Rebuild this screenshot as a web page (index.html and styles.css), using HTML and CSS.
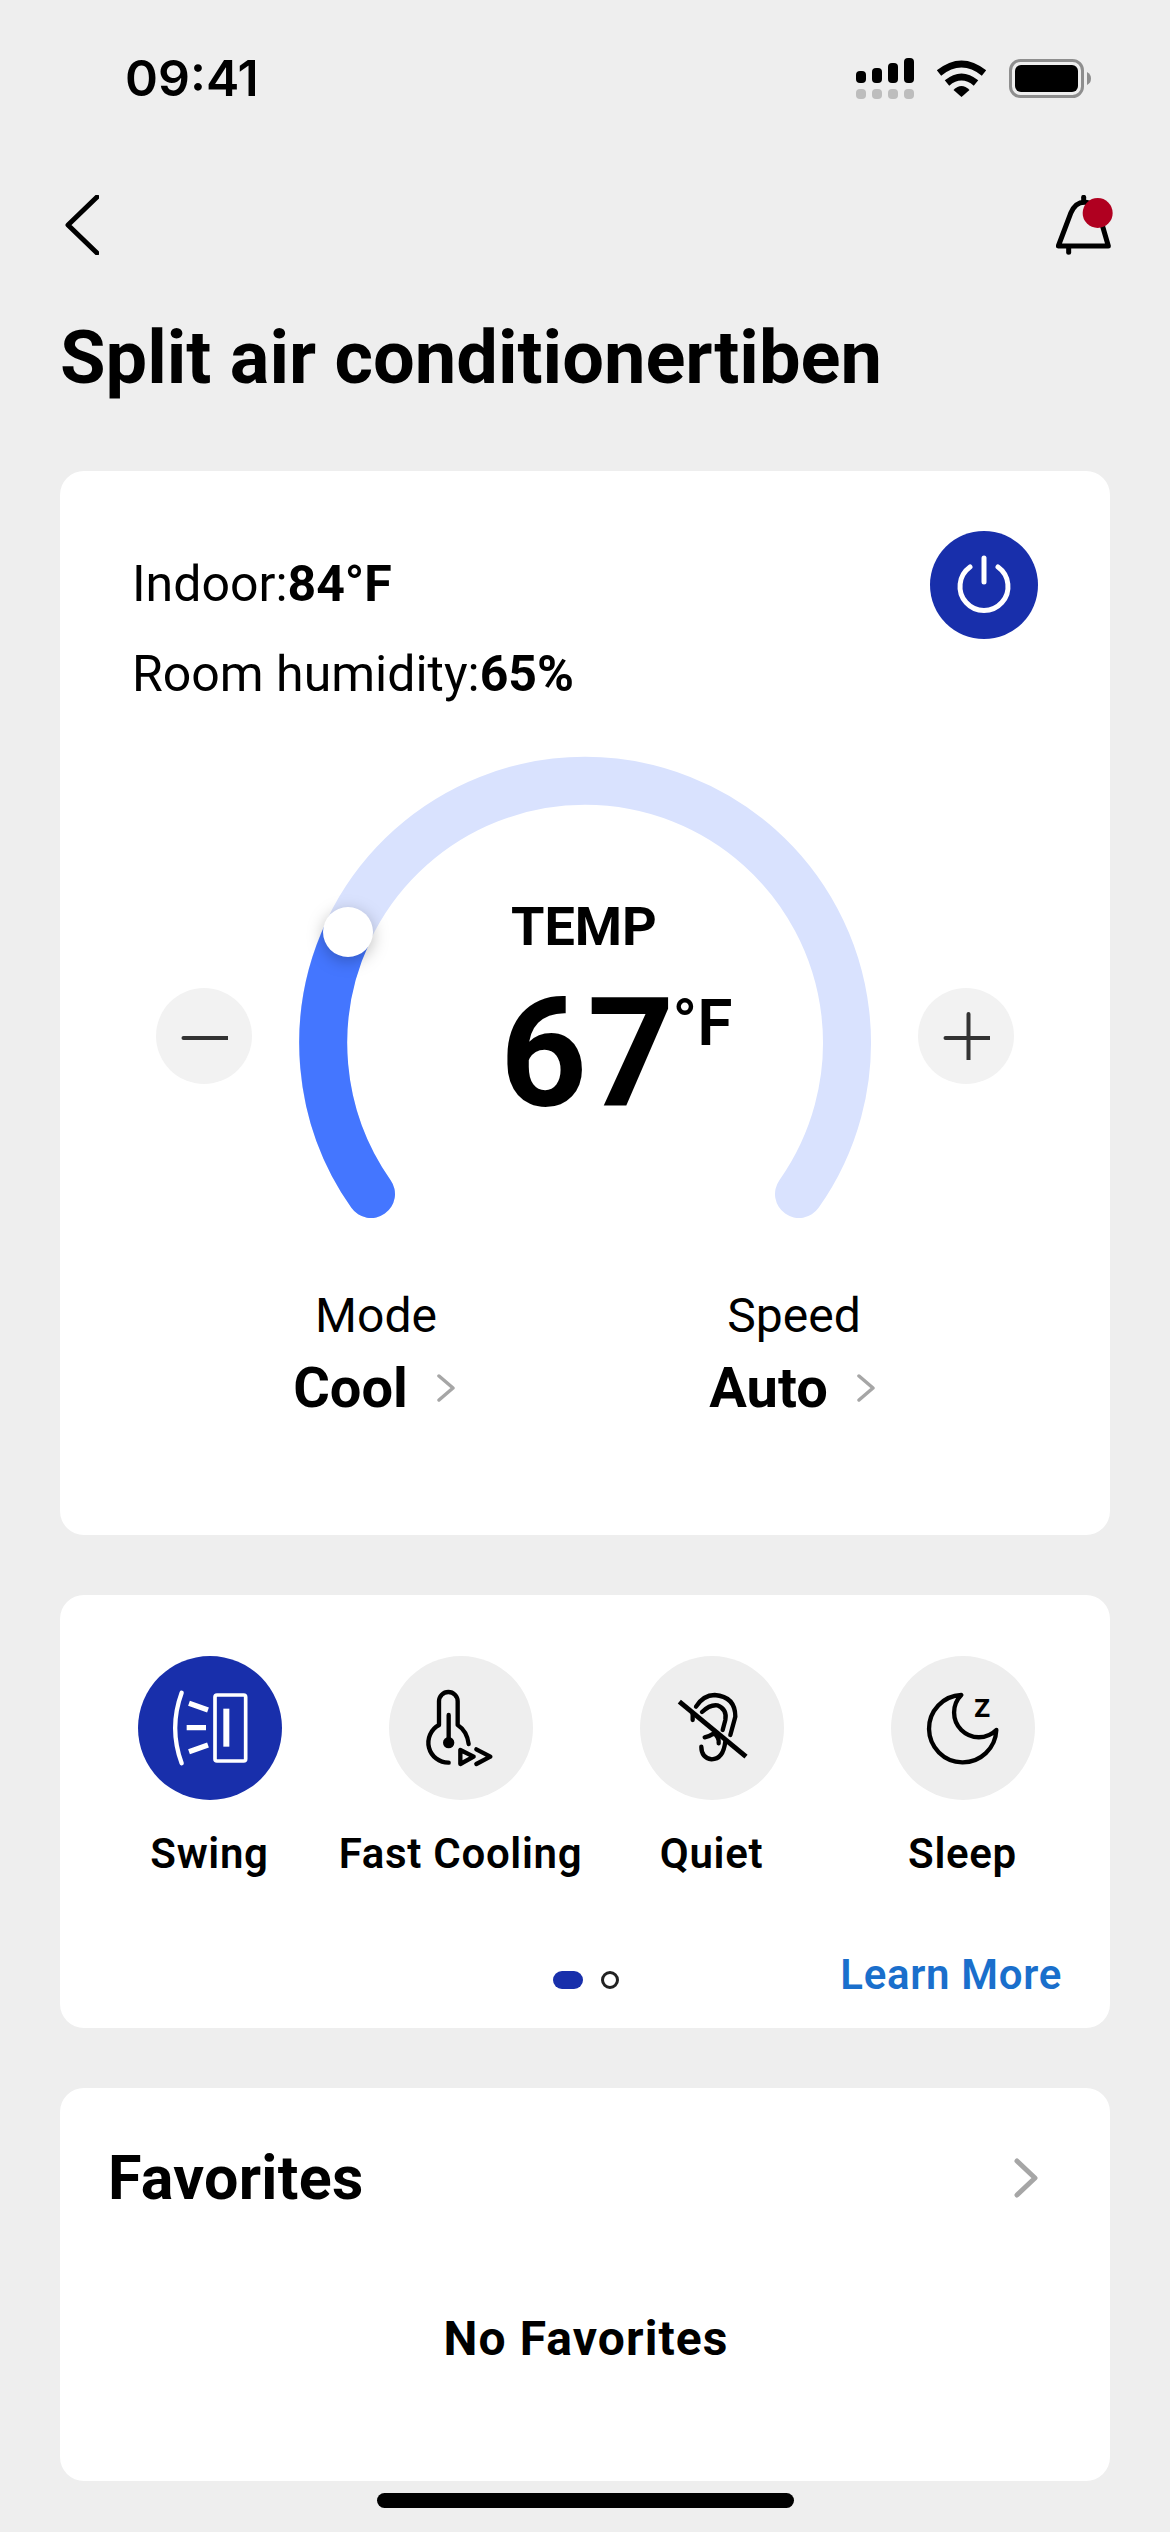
FILE: index.html
```html
<!DOCTYPE html>
<html lang="en">
<head>
    <meta charset="UTF-8">
    <meta name="viewport" content="width=device-width, initial-scale=1.0">
    <title>Split air conditionertiben</title>
    <link rel="stylesheet" href="styles.css">
</head>
<body>
    <div class="status-bar">
        <span class="time">09:41</span>
        <div class="status-icons">
            <svg width="58" height="41" viewBox="0 0 58 41">
                <rect x="0" y="13" width="10" height="12" rx="4"/>
                <rect x="16" y="10" width="10" height="15" rx="4"/>
                <rect x="32" y="5" width="10" height="20" rx="4"/>
                <rect x="48" y="0" width="10" height="25" rx="4"/>
                <g fill="#bdbdbd">
                    <rect x="0" y="31" width="10" height="10" rx="4"/>
                    <rect x="16" y="31" width="10" height="10" rx="4"/>
                    <rect x="32" y="31" width="10" height="10" rx="4"/>
                    <rect x="48" y="31" width="10" height="10" rx="4"/>
                </g>
            </svg>
            <svg width="51" height="37" viewBox="0 0 51 37">
                <path d="M3 13 Q25.5 -5 48 13" fill="none" stroke="#000" stroke-width="7"/>
                <path d="M11 23 Q25.5 11 40 23" fill="none" stroke="#000" stroke-width="7"/>
                <path d="M17.5 30 Q25.5 22 33.5 30 L25.5 37 Z"/>
            </svg>
            <svg width="82" height="39" viewBox="0 0 82 39">
                <rect x="1.5" y="1.5" width="72" height="36" rx="10" fill="none" stroke="#8e8e8e" stroke-width="3"/>
                <rect x="6" y="6" width="63" height="27" rx="6"/>
                <path d="M78 13 Q82 15 82 19.5 Q82 24 78 26 Z" fill="#8e8e8e"/>
            </svg>
        </div>
    </div>

    <div class="page">
        <div class="nav">
            <svg width="34" height="60" viewBox="0 0 34 60">
                <path d="M32 2 L3 30 L32 58" fill="none" stroke="#000" stroke-width="5" stroke-linecap="round" stroke-linejoin="round"/>
            </svg>
            <svg width="57" height="60" viewBox="0 0 171 180">
                <g fill="none" stroke="#000" stroke-width="15" stroke-linecap="round" stroke-linejoin="round">
                    <path d="M7 153 H157 L130 60 Q118 22 85 22 Q58 22 44 55 Z"/>
                    <path d="M83 7 V20"/>
                    <path d="M38 155 V172"/>
                </g>
                <circle cx="125" cy="54" r="45" fill="#b00020"/>
            </svg>
        </div>

        <h1 class="title">Split air conditionertiben</h1>

        <section class="card climate">
            <div class="readings">
                <div class="reading-list">
                    <div class="reading">Indoor:<b>84°F</b></div>
                    <div class="reading">Room humidity:<b>65%</b></div>
                </div>
                <div class="power">
                    <svg width="60" height="60" viewBox="0 0 60 60">
                        <path d="M16 12 A24 24 0 1 0 44 12" fill="none" stroke="#fff" stroke-width="5" stroke-linecap="round"/>
                        <path d="M30 3 V27" fill="none" stroke="#fff" stroke-width="5" stroke-linecap="round"/>
                    </svg>
                </div>
            </div>

            <div class="gauge-row">
                <div class="round-btn">
                    <svg width="48" height="48" viewBox="-2.5 0 48 48"><path d="M1 26 H47" stroke="#333" stroke-width="4" stroke-linecap="round"/></svg>
                </div>
                <div class="gauge">
                    <svg class="gauge-arc" width="572" height="460" viewBox="0 0 572 460">
                        <path class="arc-track" d="M72 438 A262 262 0 1 1 500 438"/>
                        <path class="arc-value" d="M72 438 A262 262 0 0 1 49 176"/>
                        <circle class="arc-handle" cx="49" cy="176" r="25"/>
                    </svg>
                    <div class="gauge-text">
                        <div class="temp-label">TEMP</div>
                        <div class="temp-value">67<span class="temp-unit">°F</span></div>
                    </div>
                </div>
                <div class="round-btn">
                    <svg width="48" height="48" viewBox="-2.5 0 48 48"><path d="M1 26 H47 M24 2 V48" stroke="#333" stroke-width="4" stroke-linecap="round" fill="none"/></svg>
                </div>
            </div>

            <div class="settings">
                <div class="setting">
                    <div class="setting-name">Mode</div>
                    <div class="setting-value">Cool
                        <svg width="20" height="28" viewBox="0 0 20 28"><path d="M3 2 L17 14 L3 26" fill="none" stroke="#a6a6a6" stroke-width="3.5" stroke-linecap="round" stroke-linejoin="round"/></svg>
                    </div>
                </div>
                <div class="setting">
                    <div class="setting-name">Speed</div>
                    <div class="setting-value">Auto
                        <svg width="20" height="28" viewBox="0 0 20 28"><path d="M3 2 L17 14 L3 26" fill="none" stroke="#a6a6a6" stroke-width="3.5" stroke-linecap="round" stroke-linejoin="round"/></svg>
                    </div>
                </div>
            </div>
        </section>

        <section class="card functions">
            <div class="function-grid">
                <div class="function">
                    <div class="function-icon active">
                        <svg width="144" height="144" viewBox="0 0 432 432">
                            <g fill="none" stroke="#fff" stroke-linejoin="round">
                                <rect x="231" y="117" width="92" height="198" rx="6" stroke-width="11"/>
                                <path d="M153 142 L210 162 M146 215 H204 M153 287 L210 267" stroke-width="16"/>
                                <path d="M131 110 Q92 216 131 322" stroke-width="13" stroke-linecap="round"/>
                            </g>
                            <rect x="256" y="158" width="18" height="114" fill="#fff"/>
                        </svg>
                    </div>
                    <div class="function-name">Swing</div>
                </div>
                <div class="function">
                    <div class="function-icon">
                        <svg width="144" height="144" viewBox="0 0 432 432">
                            <g fill="none" stroke="#000" stroke-width="13" stroke-linecap="round" stroke-linejoin="round">
                                <path d="M179 320 A60 60 0 0 1 150 207 V136 A28 28 0 0 1 206 136 V207 Q234 225 239 264"/>
                                <path d="M179 177 V260"/>
                                <path d="M214 282 V324 L254 302 Z"/>
                                <path d="M262 280 L304 302 L262 324"/>
                            </g>
                            <circle cx="179" cy="260" r="17"/>
                        </svg>
                    </div>
                    <div class="function-name">Fast Cooling</div>
                </div>
                <div class="function">
                    <div class="function-icon">
                        <svg width="144" height="144" viewBox="0 0 432 432">
                            <g fill="none" stroke="#000" stroke-width="13" stroke-linecap="round" stroke-linejoin="round">
                                <path d="M168 152 Q190 117 224 117 Q286 122 286 182 L271 237"/>
                                <path d="M186 168 Q210 145 232 148 Q262 160 256 192 L248 222"/>
                                <path d="M158 175 V192"/>
                                <path d="M194 244 Q210 240 222 232 Q238 244 236 262"/>
                                <path d="M256 256 Q250 310 215 310 Q184 305 184 272"/>
                            </g>
                            <path d="M118 137 L318 302" stroke="#000" stroke-width="15"/>
                        </svg>
                    </div>
                    <div class="function-name">Quiet</div>
                </div>
                <div class="function">
                    <div class="function-icon">
                        <svg width="144" height="144" viewBox="0 0 432 432">
                            <path d="M211 117 A101 101 0 1 0 316 222 A70 70 0 0 1 211 117 Z" fill="none" stroke="#000" stroke-width="13" stroke-linejoin="round"/>
                            <text class="moon-z" x="248" y="182">z</text>
                        </svg>
                    </div>
                    <div class="function-name">Sleep</div>
                </div>
            </div>
            <div class="functions-foot">
                <div></div>
                <div class="dots"><span class="dot-current"></span><span class="dot"></span></div>
                <a class="learn-more">Learn More</a>
            </div>
        </section>

        <section class="card favorites">
            <div class="favorites-head">
                <h2 class="favorites-title">Favorites</h2>
                <svg width="24" height="40" viewBox="0 0 24 40"><path d="M3 3 L21 20 L3 37" fill="none" stroke="#a6a6a6" stroke-width="5" stroke-linecap="round" stroke-linejoin="round"/></svg>
            </div>
            <div class="favorites-empty">No Favorites</div>
        </section>

        <div class="home-bar"></div>
    </div>
</body>
</html>
```

FILE: styles.css
```css
* {
    box-sizing: border-box;
}
body {
    margin: 0;
    width: 1170px;
    height: 2532px;
    overflow: hidden;
    background-color: #eeeeee;
    font-family: Roboto, sans-serif;
    color: #000;
}
svg {
    display: block;
}
.status-bar {
    display: flex;
    justify-content: space-between;
    align-items: center;
    height: 60px;
    margin-top: 48px;
    padding: 0 79px 0 125px;
}
.time {
    font-family: Inter, sans-serif;
    font-size: 50px;
    font-weight: 600;
    line-height: 60px;
}
.status-icons {
    display: flex;
    align-items: center;
    gap: 22px;
}
.page {
    padding: 0 60px;
}
.nav {
    display: flex;
    justify-content: space-between;
    align-items: center;
    height: 60px;
    margin: 87px -3px 0 0;
    padding-left: 5px;
}
.title {
    margin: 63px 0 73px;
    font-size: 74px;
    font-weight: 700;
    line-height: 80px;
}
.card {
    background-color: #fff;
    border-radius: 24px;
}
.climate {
    padding: 60px 72px 117px 72px;
    margin-bottom: 60px;
}
.readings {
    display: flex;
    justify-content: space-between;
    height: 172px;
}
.reading-list {
    display: flex;
    flex-direction: column;
    gap: 30px;
    padding-top: 23px;
}
.reading {
    font-size: 50px;
    line-height: 60px;
}
.reading b {
    font-weight: 700;
}
.power {
    display: flex;
    justify-content: center;
    align-items: center;
    width: 108px;
    height: 108px;
    border-radius: 50%;
    background-color: #182fab;
}
.gauge-row {
    display: flex;
    justify-content: space-between;
    align-items: flex-start;
    margin: 53px 24px 0;
}
.round-btn {
    display: flex;
    justify-content: center;
    align-items: center;
    width: 96px;
    height: 96px;
    margin-top: 232px;
    border-radius: 50%;
    background-color: #f2f2f2;
}
.gauge {
    position: relative;
    width: 572px;
    height: 460px;
}
.gauge-arc {
    overflow: visible;
}
.arc-track {
    fill: none;
    stroke: #d9e2fe;
    stroke-width: 48;
    stroke-linecap: round;
}
.arc-value {
    fill: none;
    stroke: #4476ff;
    stroke-width: 48;
    stroke-linecap: round;
}
.arc-handle {
    fill: #fff;
    filter: drop-shadow(0 4px 8px rgba(0,0,0,0.25));
}
.gauge-text {
    position: absolute;
    left: 201px;
    top: 141px;
}
.temp-label {
    font-size: 54px;
    font-weight: 700;
    line-height: 60px;
    margin-left: 11px;
}
.temp-value {
    font-size: 152px;
    font-weight: 700;
    line-height: 150px;
    margin-top: 22px;
}
.temp-unit {
    margin-left: -2px;
    font-size: 64px;
    font-weight: 600;
    vertical-align: 61px;
    line-height: 0;
}
.settings {
    display: grid;
    grid-template-columns: 1fr 1fr;
    margin-top: 70px;
    padding: 0 35px;
}
.setting {
    text-align: center;
}
.setting-name {
    font-size: 48px;
    line-height: 60px;
}
.setting-value {
    display: flex;
    justify-content: center;
    align-items: center;
    gap: 28px;
    margin-top: 12px;
    padding-right: 3px;
    font-size: 56px;
    font-weight: 700;
    line-height: 60px;
}
.functions {
    padding: 61px 48px 28px 24px;
    margin-bottom: 60px;
}
.function-grid {
    display: grid;
    grid-template-columns: repeat(4, 251px);
}
.function {
    display: flex;
    flex-direction: column;
    align-items: center;
}
.function-icon {
    width: 144px;
    height: 144px;
    border-radius: 50%;
    background-color: #eeeeee;
}
.function-icon.active {
    background-color: #182fab;
}
.function-name {
    margin-top: 29px;
    font-size: 42px;
    font-weight: 600;
    letter-spacing: 0.7px;
    line-height: 50px;
    white-space: nowrap;
}
.moon-z {
    font-family: Roboto, sans-serif;
    font-size: 100px;
    font-weight: 500;
}
.functions-foot {
    display: grid;
    grid-template-columns: 1fr auto 1fr;
    align-items: center;
    margin: 71px 0 0 28px;
}
.dots {
    display: flex;
    align-items: center;
    gap: 18px;
    padding: 10px 2px 0 0;
}
.dot-current {
    width: 30px;
    height: 18px;
    border-radius: 9px;
    background-color: #182fab;
}
.dot {
    width: 18px;
    height: 18px;
    border: 3px solid #222;
    border-radius: 50%;
}
.learn-more {
    justify-self: end;
    font-size: 42px;
    font-weight: 600;
    letter-spacing: 0.7px;
    line-height: 50px;
    color: #1a6fcc;
}
.favorites {
    padding: 60px 72px 112px 48px;
}
.favorites-head {
    display: flex;
    justify-content: space-between;
    align-items: center;
    height: 60px;
}
.favorites-title {
    margin: 0;
    font-size: 61px;
    font-weight: 700;
    letter-spacing: 0.3px;
    line-height: 60px;
}
.favorites-empty {
    margin-top: 101px;
    padding-left: 26px;
    text-align: center;
    font-size: 48px;
    font-weight: 700;
    letter-spacing: 1.1px;
    line-height: 60px;
}
.home-bar {
    width: 417px;
    height: 15px;
    margin: 12px auto 0;
    border-radius: 8px;
    background-color: #000;
}
```
